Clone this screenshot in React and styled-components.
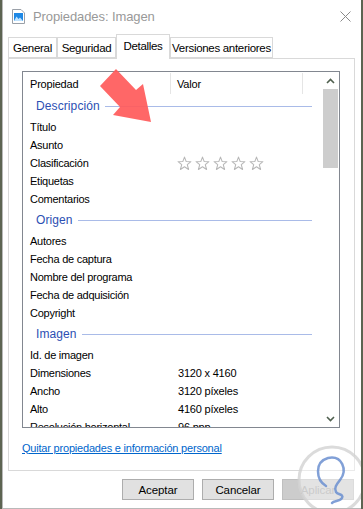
import React from 'react';
import styled, { createGlobalStyle } from 'styled-components';

const GlobalStyle = createGlobalStyle`
    html, body {
        margin: 0;
        padding: 0;
        background: #5d6452;
    }
    body {
        font-family: "Liberation Sans", Arial, sans-serif;
        font-size: 11px;
        color: #000;
    }
`;

const Window = styled.div`
    position: relative;
    box-sizing: border-box;
    width: 359px;
    height: 509px;
    margin-left: 2px;
    background: #fff;
    border-left: 1px solid #b9b9b9;
    border-bottom: 1px solid #b9b9b9;
    overflow: hidden;
`;

const TitleBar = styled.div`
    display: flex;
    align-items: center;
    height: 32px;
    padding: 0 10px 0 9px;
`;

const TitleText = styled.div`
    flex: 1;
    margin-left: 8px;
    font-size: 13px;
    color: #999;
    letter-spacing: -0.1px;
`;

const Body = styled.div`
    box-sizing: border-box;
    width: 358px;
    padding: 2px 6px 0 5px;
`;

const TabStrip = styled.div`
    display: flex;
    align-items: flex-end;
    height: 24px;
    position: relative;
    z-index: 1;
`;

const Tab = styled.div`
    box-sizing: border-box;
    flex: none;
    display: flex;
    align-items: center;
    justify-content: center;
    width: ${ p => p.w }px;
    height: ${ p => p.active ? 25 : 21 }px;
    margin-bottom: ${ p => p.active ? -1 : 0 }px;
    padding-bottom: ${ p => p.active ? 3 : 0 }px;
    background: #fff;
    border: 1px solid #d9d9d9;
    border-bottom: ${ p => p.active ? 'none' : '1px solid #d9d9d9' };
    font-size: 11.5px;
    letter-spacing: -0.3px;
    white-space: nowrap;
`;

const Panel = styled.div`
    box-sizing: border-box;
    height: 413px;
    border: 1px solid #d9d9d9;
    padding: 12px 0 0 13px;
`;

const ListBox = styled.div`
    box-sizing: border-box;
    display: flex;
    width: 318px;
    height: 357px;
    border: 1px solid #828790;
`;

const ListContent = styled.div`
    flex: 1;
    min-width: 0;
    overflow: hidden;
`;

const Header = styled.div`
    display: flex;
    height: 22px;
    align-items: stretch;
`;

const HeaderCell = styled.div`
    box-sizing: border-box;
    display: flex;
    align-items: center;
    width: ${ p => p.w ? `${ p.w }px` : 'auto' };
    flex: ${ p => p.w ? 'none' : 1 };
    padding-left: ${ p => p.pad || 0 }px;
    border-right: ${ p => p.sep ? '1px solid #e5e5e5' : 'none' };
    margin-top: 1px;
    letter-spacing: -0.2px;
`;

const GroupRow = styled.div`
    display: flex;
    align-items: center;
    height: 24px;
    padding: 0 10px 0 13px;
`;

const GroupLabel = styled.span`
    color: #2c4fb3;
    font-size: 12px;
    letter-spacing: 0.1px;
`;

const GroupLine = styled.div`
    flex: 1;
    height: 1px;
    margin-left: 5px;
    background: #a9bbe8;
`;

const Row = styled.div`
    display: flex;
    align-items: center;
    height: 18px;
    white-space: nowrap;
`;

const PropCell = styled.div`
    box-sizing: border-box;
    width: 148px;
    padding-left: 7px;
    letter-spacing: -0.25px;
`;

const ValueCell = styled.div`
    flex: 1;
    padding-left: 7px;
    letter-spacing: -0.2px;
`;

const Stars = styled.div`
    display: flex;
    gap: 3px;
    padding-left: 6px;
`;

const ScrollBar = styled.div`
    display: flex;
    flex-direction: column;
    align-items: center;
    flex: none;
    width: 17px;
    background: #fff;
`;

const ScrollArrow = styled.div`
    display: flex;
    align-items: center;
    justify-content: center;
    height: 17px;
    width: 17px;
`;

const ScrollTrack = styled.div`
    flex: 1;
    width: 15px;
`;

const ScrollThumb = styled.div`
    height: 79px;
    background: #cdcdcd;
`;

const LinkLine = styled.div`
    display: flex;
    align-items: center;
    height: 15px;
    margin-top: 12px;
`;

const Link = styled.a`
    color: #0066cc;
    text-decoration: underline;
    font-size: 11px;
    letter-spacing: -0.2px;
    cursor: pointer;
`;

const ButtonRow = styled.div`
    display: flex;
    justify-content: flex-end;
    gap: 8px;
    margin-top: 8px;
    padding-right: 1px;
`;

const Button = styled.button`
    box-sizing: border-box;
    flex: none;
    width: 72px;
    height: 21px;
    margin: 0;
    padding: 0;
    font-family: inherit;
    font-size: 11.5px;
    letter-spacing: -0.1px;
    color: ${ p => p.disabled ? '#a0a0a0' : '#000' };
    background: ${ p => p.disabled ? '#cccccc' : '#e1e1e1' };
    border: 1px solid ${ p => p.disabled ? '#bfbfbf' : '#adadad' };
`;

const ArrowOverlay = styled.svg`
    position: absolute;
    left: 0;
    top: 0;
    pointer-events: none;
`;

const Watermark = styled.svg`
    position: absolute;
    left: 289px;
    top: 440px;
    pointer-events: none;
`;

const FileIcon = () => (
    <svg width="13" height="15" viewBox="0 0 13 15">
        <path d="M0.5 0.5 H9 L12.5 4 V14.5 H0.5 Z" fill="#fff" stroke="#9aa0a8" />
        <rect x="2" y="4" width="9" height="8" fill="#1e88e5" />
        <path d="M2 12 L4.5 7.5 L6.5 10 L8 8.5 L11 12 Z" fill="#bfe3ff" />
    </svg>
);

const CloseIcon = () => (
    <svg width="11" height="11" viewBox="0 0 11 11">
        <path d="M0.5 0.5 L10.5 10.5 M10.5 0.5 L0.5 10.5" stroke="#8a8a8a" strokeWidth="1" />
    </svg>
);

const Star = () => (
    <svg width="15" height="15" viewBox="0 0 14 14">
        <path
            d="M7 1 L8.6 5.2 L13 5.3 L9.6 8.1 L10.8 12.6 L7 10 L3.2 12.6 L4.4 8.1 L1 5.3 L5.4 5.2 Z"
            fill="none"
            stroke="#b8b8b8"
            strokeWidth="1"
            strokeLinejoin="round"
        />
    </svg>
);

const Chevron = ({ down }) => (
    <svg width="9" height="6" viewBox="0 0 9 6">
        <path
            d={ down ? 'M1 1 L4.5 4.5 L8 1' : 'M1 5 L4.5 1.5 L8 5' }
            fill="none"
            stroke="#50604f"
            strokeWidth="1.6"
        />
    </svg>
);

const groups = [
    {
        name: 'Descripción',
        rows: [
            ['Título', ''],
            ['Asunto', ''],
            ['Clasificación', 'stars'],
            ['Etiquetas', ''],
            ['Comentarios', ''],
        ],
    },
    {
        name: 'Origen',
        rows: [
            ['Autores', ''],
            ['Fecha de captura', ''],
            ['Nombre del programa', ''],
            ['Fecha de adquisición', ''],
            ['Copyright', ''],
        ],
    },
    {
        name: 'Imagen',
        rows: [
            ['Id. de imagen', ''],
            ['Dimensiones', '3120 x 4160'],
            ['Ancho', '3120 píxeles'],
            ['Alto', '4160 píxeles'],
            ['Resolución horizontal', '96 ppp'],
        ],
    },
];

const tabs = [
    { label: 'General', w: 49 },
    { label: 'Seguridad', w: 59 },
    { label: 'Detalles', w: 54, active: true },
    { label: 'Versiones anteriores', w: 103 },
];

const renderValue = (value) => {
    if (value === 'stars') {
        return <Stars>{ [0, 1, 2, 3, 4].map(i => <Star key={ `star-${i}` } />) }</Stars>;
    }
    return <ValueCell>{ value }</ValueCell>;
};

const App = () => (
    <>
        <GlobalStyle />
        <Window>
            <TitleBar>
                <FileIcon />
                <TitleText>Propiedades: Imagen</TitleText>
                <CloseIcon />
            </TitleBar>
            <Body>
                <TabStrip>
                    { tabs.map(tab => (
                        <Tab key={ tab.label } w={ tab.w } active={ tab.active }>{ tab.label }</Tab>
                    )) }
                </TabStrip>
                <Panel>
                    <ListBox>
                        <ListContent>
                            <Header>
                                <HeaderCell w={ 148 } pad={ 7 } sep>Propiedad</HeaderCell>
                                <HeaderCell w={ 132 } pad={ 6 } sep>Valor</HeaderCell>
                                <HeaderCell />
                            </Header>
                            { groups.map(group => (
                                <React.Fragment key={ group.name }>
                                    <GroupRow>
                                        <GroupLabel>{ group.name }</GroupLabel>
                                        <GroupLine />
                                    </GroupRow>
                                    { group.rows.map(([prop, value]) => (
                                        <Row key={ prop }>
                                            <PropCell>{ prop }</PropCell>
                                            { renderValue(value) }
                                        </Row>
                                    )) }
                                </React.Fragment>
                            )) }
                        </ListContent>
                        <ScrollBar>
                            <ScrollArrow><Chevron /></ScrollArrow>
                            <ScrollTrack><ScrollThumb /></ScrollTrack>
                            <ScrollArrow><Chevron down /></ScrollArrow>
                        </ScrollBar>
                    </ListBox>
                    <LinkLine>
                        <Link>Quitar propiedades e información personal</Link>
                    </LinkLine>
                </Panel>
                <ButtonRow>
                    <Button>Aceptar</Button>
                    <Button>Cancelar</Button>
                    <Button disabled>Aplicar</Button>
                </ButtonRow>
            </Body>
            <ArrowOverlay width="359" height="509">
                <polygon
                    points="113,69 133,90 140,84 148,122 110,115 117,107 97,86"
                    fill="#ff5a5a"
                    fillOpacity="0.92"
                />
            </ArrowOverlay>
            <Watermark width="80" height="80" viewBox="0 0 80 80">
                <circle cx="40" cy="40" r="33" fill="#ffffff" fillOpacity="0.45" stroke="#d2d2d2" strokeOpacity="0.8" strokeWidth="3" />
                <path
                    d="M34 46 C24 40 22 22 36 18 C50 15 56 30 48 40 C44 45 42 48 44 52 C46 55 52 54 50 58 C48 62 42 60 40 63"
                    fill="none"
                    stroke="#6b8fd0"
                    strokeOpacity="0.85"
                    strokeWidth="2.5"
                    strokeLinecap="round"
                />
            </Watermark>
        </Window>
    </>
);

export default App;
